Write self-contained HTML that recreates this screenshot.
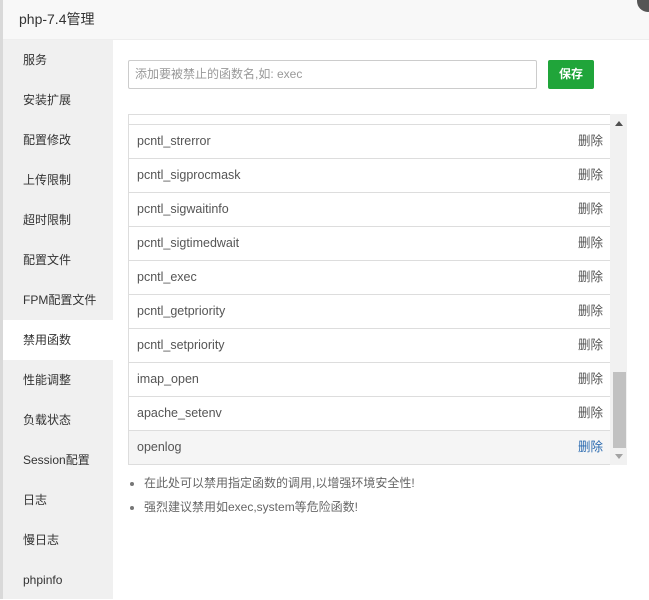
<!DOCTYPE html>
<html><head><meta charset="utf-8"><style>
*{margin:0;padding:0;box-sizing:border-box}
body{width:649px;height:599px;overflow:hidden;background:#fff;font-family:"Liberation Sans","Noto Sans CJK SC",sans-serif;font-size:12px;color:#555;position:relative}
.edge{position:absolute;left:0;top:0;width:3px;height:599px;background:#d9d9d9}
.title{position:absolute;left:3px;top:0;width:646px;height:40px;background:#f8f8f8;border-bottom:1px solid #eee;font-size:14px;color:#333;line-height:39px;padding-left:16px}
.close{position:absolute;left:637px;top:-10px;width:22px;height:22px;border-radius:50%;background:#555}
.side{position:absolute;left:3px;top:40px;width:110px;height:559px;background:#f0f0f0}
.side div{height:40px;line-height:40px;padding-left:20px;color:#333;font-size:12px}
.side .on{background:#fff}
.inp{position:absolute;left:128px;top:60px;width:409px;height:29px;border:1px solid #ccc;border-radius:2px;color:#999;line-height:27px;padding-left:6px}
.btn{position:absolute;left:548px;top:60px;width:46px;height:29px;background:#20a53a;border-radius:2px;color:#fff;font-weight:bold;text-align:center;line-height:29px}
.tbl{position:absolute;left:128px;top:114px;width:483px;height:351px;border:1px solid #ddd;overflow:hidden}
.r{position:absolute;left:0;width:481px;height:34px;border-top:1px solid #ddd;line-height:33px;padding-left:8px;color:#555;font-size:12.5px}
.r span{position:absolute;right:7px;top:0;color:#555}
.sb{position:absolute;left:610px;top:114px;width:17px;height:351px;background:#f1f1f1}
.thumb{position:absolute;left:613px;top:372px;width:13px;height:76px;background:#c1c1c1}
.notes{position:absolute;left:130px;top:474px;color:#666}
.notes div{height:24px;line-height:18px}
.notes b{display:inline-block;width:4px;height:4px;border-radius:50%;background:#777;margin-right:10px;vertical-align:middle}
</style></head><body>
<div class="edge"></div>
<div class="title">php-7.4管理</div>
<div class="close"></div>
<div class="side">
<div>服务</div><div>安装扩展</div><div>配置修改</div><div>上传限制</div><div>超时限制</div><div>配置文件</div><div>FPM配置文件</div><div class="on">禁用函数</div><div>性能调整</div><div>负载状态</div><div>Session配置</div><div>日志</div><div>慢日志</div><div>phpinfo</div>
</div>
<div class="inp">添加要被禁止的函数名,如: exec</div>
<div class="btn">保存</div>
<div class="tbl">
<div class="r" style="top:-24px">x<span>删除</span></div>
<div class="r" style="top:9px">pcntl_strerror<span>删除</span></div>
<div class="r" style="top:43px">pcntl_sigprocmask<span>删除</span></div>
<div class="r" style="top:77px">pcntl_sigwaitinfo<span>删除</span></div>
<div class="r" style="top:111px">pcntl_sigtimedwait<span>删除</span></div>
<div class="r" style="top:145px">pcntl_exec<span>删除</span></div>
<div class="r" style="top:179px">pcntl_getpriority<span>删除</span></div>
<div class="r" style="top:213px">pcntl_setpriority<span>删除</span></div>
<div class="r" style="top:247px">imap_open<span>删除</span></div>
<div class="r" style="top:281px">apache_setenv<span>删除</span></div>
<div class="r" style="top:315px;background:#f5f5f5">openlog<span style="color:#2a6ab0">删除</span></div>
</div>
<div class="sb"></div>
<div style="position:absolute;left:615px;top:121px;width:0;height:0;border-left:4px solid transparent;border-right:4px solid transparent;border-bottom:5px solid #505050"></div>
<div class="thumb"></div>
<div style="position:absolute;left:615px;top:454px;width:0;height:0;border-left:4px solid transparent;border-right:4px solid transparent;border-top:5px solid #a3a3a3"></div>
<div class="notes">
<div><b></b>在此处可以禁用指定函数的调用,以增强环境安全性!</div>
<div><b></b>强烈建议禁用如exec,system等危险函数!</div>
</div>
</body></html>
